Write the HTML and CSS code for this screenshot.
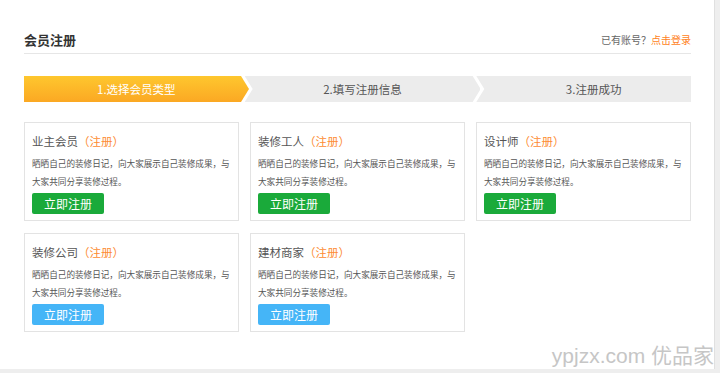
FILE: index.html
```html
<!doctype html>
<html>
<head>
	<meta charset="UTF-8" />
	<title>会员注册</title>
	<link rel="stylesheet" href="styles.css">
</head>
<body>
	<div id="page">
		<div class="regHead">
			<h2>会员注册</h2>
			<p class="loginTip">已有账号？<a href="#">点击登录</a></p>
		</div>

		<div class="steps">
			<div class="step stepFirst stepOn">1.选择会员类型</div>
			<div class="step stepMid">2.填写注册信息</div>
			<div class="step stepLast">3.注册成功</div>
		</div>

		<div class="typeList">
			<div class="typeCard">
				<p class="typeName">业主会员<span class="typeReg">（注册）</span></p>
				<p class="typeDesc">晒晒自己的装修日记，向大家展示自己装修成果，与大家共同分享装修过程。</p>
				<a class="regBtn" href="#">立即注册</a>
			</div>
			<div class="typeCard">
				<p class="typeName">装修工人<span class="typeReg">（注册）</span></p>
				<p class="typeDesc">晒晒自己的装修日记，向大家展示自己装修成果，与大家共同分享装修过程。</p>
				<a class="regBtn" href="#">立即注册</a>
			</div>
			<div class="typeCard">
				<p class="typeName">设计师<span class="typeReg">（注册）</span></p>
				<p class="typeDesc">晒晒自己的装修日记，向大家展示自己装修成果，与大家共同分享装修过程。</p>
				<a class="regBtn" href="#">立即注册</a>
			</div>
			<div class="typeCard">
				<p class="typeName">装修公司<span class="typeReg">（注册）</span></p>
				<p class="typeDesc">晒晒自己的装修日记，向大家展示自己装修成果，与大家共同分享装修过程。</p>
				<a class="regBtn regBtnBlue" href="#">立即注册</a>
			</div>
			<div class="typeCard">
				<p class="typeName">建材商家<span class="typeReg">（注册）</span></p>
				<p class="typeDesc">晒晒自己的装修日记，向大家展示自己装修成果，与大家共同分享装修过程。</p>
				<a class="regBtn regBtnBlue" href="#">立即注册</a>
			</div>
		</div>

		<div class="watermark">ypjzx.com 优品家</div>
	</div>
</body>
</html>
```

FILE: styles.css
```css
body {
	margin: 0;
	background: #eeeeee;
	font-family: "Noto Sans CJK SC", sans-serif;
	color: #555;
}
#page {
	position: relative;
	box-sizing: border-box;
	width: 715px;
	height: 369px;
	padding: 0 23px 0 24px;
	background: #fff;
	border-right: 1px solid #e0e0e0;
}
.regHead {
	display: flex;
	justify-content: space-between;
	align-items: center;
	padding: 31px 0 4px 0;
	border-bottom: 1px solid #e6e6e6;
}
.regHead h2 {
	margin: 0;
	font-size: 13px;
	line-height: 18px;
	font-weight: bold;
	color: #333;
}
.loginTip {
	margin: 0;
	font-size: 10px;
	line-height: 18px;
	color: #666;
}
.loginTip a {
	color: #ff7f22;
	text-decoration: none;
}
.steps {
	display: flex;
	margin-top: 22px;
	height: 26px;
}
.step {
	box-sizing: border-box;
	height: 26px;
	line-height: 26px;
	font-size: 11.5px;
	text-align: center;
	background: #ececec;
	color: #555;
}
.stepOn {
	background: linear-gradient(#fec72e, #fba823);
	color: #fff;
}
.stepFirst {
	width: 225px;
	clip-path: polygon(0 0, 217px 0, 225px 50%, 217px 100%, 0 100%);
}
.stepMid {
	width: 236px;
	margin-left: -4px;
	clip-path: polygon(0 0, 228px 0, 236px 50%, 228px 100%, 0 100%, 8px 50%);
}
.stepLast {
	width: 215px;
	margin-left: -4px;
	padding-left: 20px;
	clip-path: polygon(0 0, 100% 0, 100% 100%, 0 100%, 8px 50%);
}
.typeList {
	display: grid;
	grid-template-columns: repeat(3, 1fr);
	gap: 12px 11px;
	margin-top: 20px;
}
.typeCard {
	border: 1px solid #e3e3e3;
	padding: 9px 6px 6px 7px;
}
.typeName {
	margin: 0;
	font-size: 11.5px;
	line-height: 18px;
	color: #555;
}
.typeReg {
	color: #fd8c33;
}
.typeDesc {
	margin: 4px 0 0 0;
	font-size: 8.6px;
	line-height: 18px;
	color: #555;
}
.regBtn {
	display: block;
	width: 72px;
	height: 21px;
	margin-top: 3px;
	line-height: 21px;
	font-size: 12px;
	text-align: center;
	color: #fff;
	text-decoration: none;
	background: #1aaa3a;
	border-radius: 2px;
}
.regBtnBlue {
	background: #45b5f7;
}
.watermark {
	position: absolute;
	right: 0;
	bottom: 1px;
	font-family: "Liberation Sans", "Noto Sans CJK SC", sans-serif;
	font-size: 21px;
	line-height: 24px;
	color: #c6c6c6;
	white-space: nowrap;
}
```
